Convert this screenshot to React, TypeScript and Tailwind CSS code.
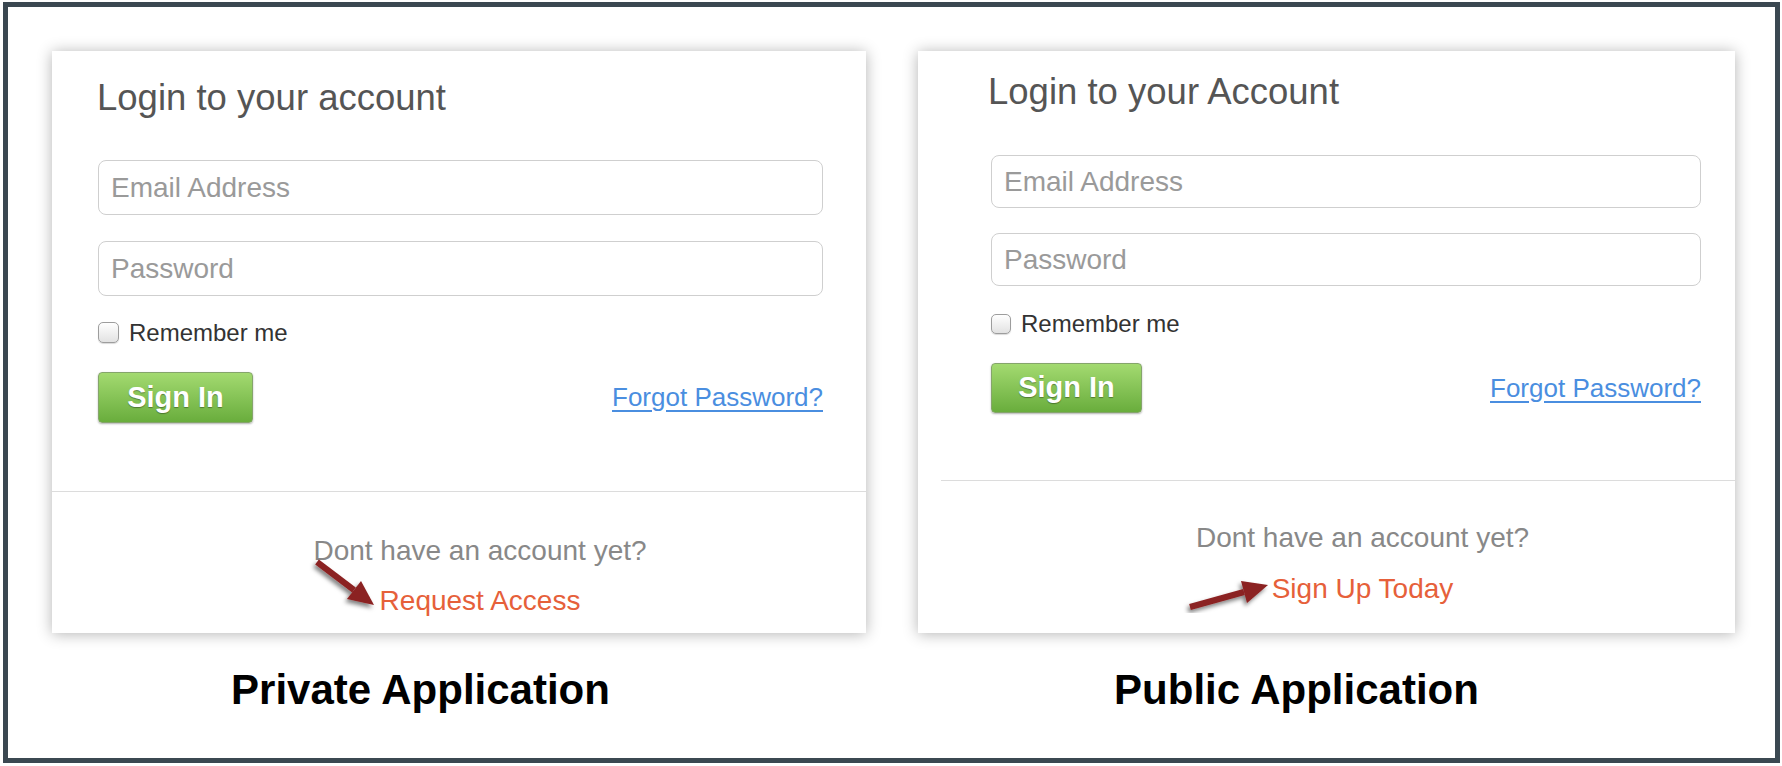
import React from "react";

interface CardConfig {
  title: string;
  link: string;
  caption: string;
  width: string;
  pad: string;
  titlePad: string;
  body: string;
  emailGap: string;
  passGap: string;
  inputH: string;
  rememberGap: string;
  box: string;
  buttonGap: string;
  button: string;
  dividerGap: string;
  divider: string;
  footer: string;
  footerGap: string;
  captionPad: string;
  viewBox: string;
  shaft: string;
  head: string;
}

const cards: CardConfig[] = [
  {
    title: "Login to your account",
    link: "Request Access",
    caption: "Private Application",
    width: "w-[814px]",
    pad: "pt-[29px] pb-[16px]",
    titlePad: "pl-[45px]",
    body: "pl-[46px] pr-[43px]",
    emailGap: "mt-[44px]",
    passGap: "mt-[26px]",
    inputH: "h-[55px]",
    rememberGap: "mt-[26px] h-[21px]",
    box: "w-[21px] h-[21px]",
    buttonGap: "mt-[29px]",
    button: "w-[155px] h-[51px]",
    dividerGap: "mt-[68px]",
    divider: "",
    footer: "pt-[43px] pl-[42px]",
    footerGap: "mt-[18px]",
    captionPad: "pr-[77px]",
    viewBox: "0 0 814 582",
    shaft: "265,511 302,539",
    head: "322,554 295,548 309,530",
  },
  {
    title: "Login to your Account",
    link: "Sign Up Today",
    caption: "Public Application",
    width: "w-[817px]",
    pad: "pt-[23px] pb-[28px]",
    titlePad: "pl-[70px]",
    body: "pl-[73px] pr-[34px]",
    emailGap: "mt-[45px]",
    passGap: "mt-[25px]",
    inputH: "h-[53px]",
    rememberGap: "mt-[28px] h-[20px]",
    box: "w-[20px] h-[20px]",
    buttonGap: "mt-[29px]",
    button: "w-[151px] h-[50px]",
    dividerGap: "mt-[67px]",
    divider: "ml-[23px]",
    footer: "pt-[41px] pl-[72px]",
    footerGap: "mt-[19px]",
    captionPad: "pr-[60px]",
    viewBox: "0 0 817 582",
    shaft: "272,556 326,541",
    head: "350,534 329,552 323,530",
  },
];

function Arrow({ c }: { c: CardConfig }) {
  const id = "sh-" + c.link.length;
  return (
    <svg
      viewBox={c.viewBox}
      className="absolute top-0 left-0 w-full h-full pointer-events-none"
    >
      <defs>
        <filter id={id} x="-20%" y="-20%" width="140%" height="140%">
          <feDropShadow dx="-2" dy="3" stdDeviation="2" floodColor="#000" floodOpacity="0.5" />
        </filter>
      </defs>
      <g filter={`url(#${id})`}>
        <polyline points={c.shaft} stroke="#8b2020" strokeWidth="6" fill="none" />
        <polygon points={c.head} fill="#8b2020" />
      </g>
    </svg>
  );
}

function LoginCard({ c }: { c: CardConfig }) {
  return (
    <div className="flex flex-col">
      <div className={`relative ${c.width} ${c.pad} bg-white shadow-[0_1px_14px_rgba(0,0,0,0.3)]`}>
        <h2 className={`${c.titlePad} text-[36.5px] leading-[36px] text-[#555]`}>{c.title}</h2>
        <div className={`${c.body} flex flex-col`}>
          <input
            placeholder="Email Address"
            className={`${c.emailGap} ${c.inputH} w-full rounded-[8px] border border-[#cfcfcf] pl-[12px] text-[28px] text-[#555] placeholder:text-[#9a9a9a] outline-none`}
          />
          <input
            placeholder="Password"
            type="password"
            className={`${c.passGap} ${c.inputH} w-full rounded-[8px] border border-[#cfcfcf] pl-[12px] text-[28px] text-[#555] placeholder:text-[#9a9a9a] outline-none`}
          />
          <label className={`${c.rememberGap} flex items-center gap-[10px]`}>
            <input
              type="checkbox"
              className={`${c.box} appearance-none rounded-[5px] border border-[#9d9d9d] bg-linear-to-b from-white to-[#e2e2e2] shadow-[0_1px_1px_rgba(0,0,0,0.15)]`}
            />
            <span className="text-[24px] text-[#333]">Remember me</span>
          </label>
          <div className={`${c.buttonGap} flex items-center justify-between`}>
            <button
              className={`${c.button} rounded-[4px] border border-[#85a56b] bg-linear-to-b from-[#a3da70] to-[#69ad3c] text-[29px] font-bold text-white [text-shadow:0_1px_1px_rgba(0,0,0,0.35)] shadow-[0_1px_2px_rgba(0,0,0,0.3)]`}
            >
              Sign In
            </button>
            <a href="#" className="text-[26px] text-[#4a8ee0] underline underline-offset-[4px]">
              Forgot Password?
            </a>
          </div>
        </div>
        <div className={`${c.dividerGap} ${c.divider} border-t border-[#dcdcdc]`} />
        <div className={`${c.footer} flex flex-col items-center`}>
          <p className="text-[28px] leading-[32px] text-[#888]">Dont have an account yet?</p>
          <a href="#" className={`${c.footerGap} text-[28px] leading-[32px] text-[#e6603a]`}>
            {c.link}
          </a>
        </div>
        <Arrow c={c} />
      </div>
      <p className={`mt-[33px] ${c.captionPad} text-center text-[42px] leading-[48px] font-bold text-black`}>
        {c.caption}
      </p>
    </div>
  );
}

export default function App() {
  return (
    <div className="w-[1782px] h-[766px] bg-white font-['Liberation_Sans',Arial,sans-serif] pt-[2px] pl-[3px]">
      <div className="w-[1777px] h-[761px] border-[5px] border-[#3b4851] flex gap-[52px] pl-[44px] pt-[44px]">
        {cards.map((c) => (
          <LoginCard key={c.caption} c={c} />
        ))}
      </div>
    </div>
  );
}
